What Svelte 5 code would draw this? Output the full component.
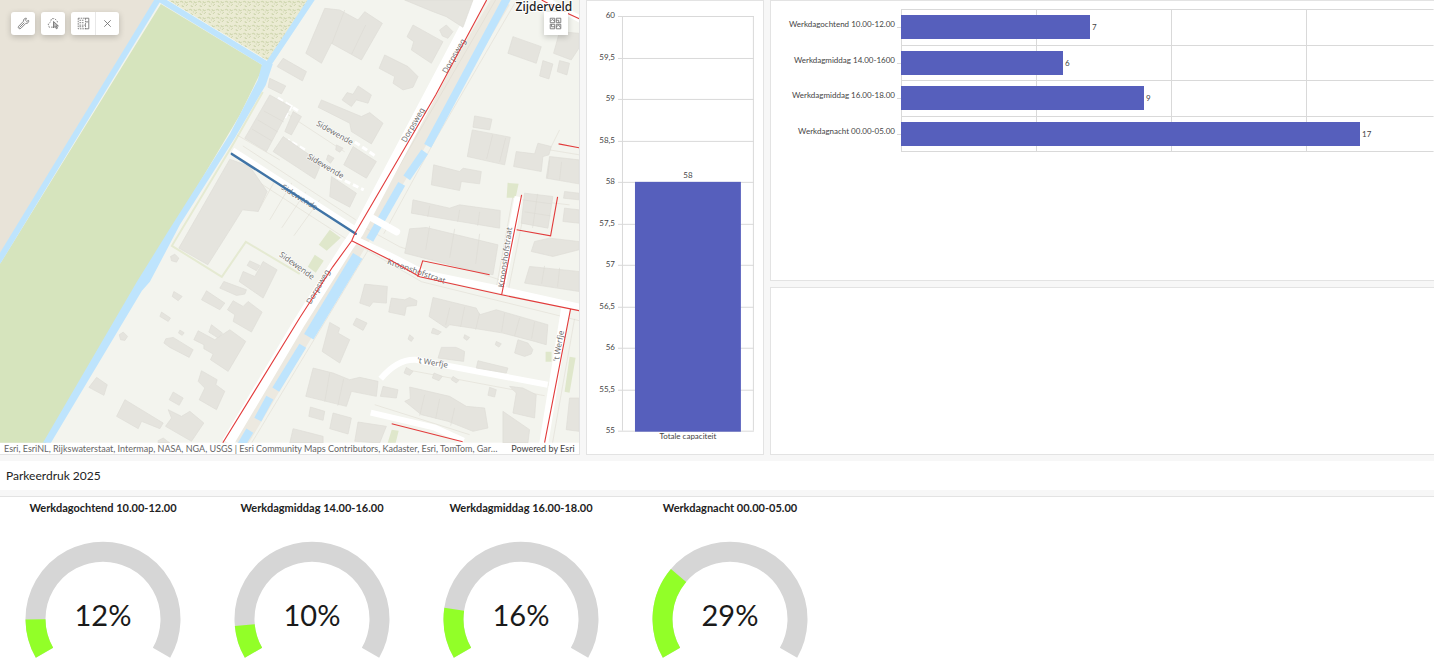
<script lang="ts">
  const capacity = 58;
  const capacityTicks = [60, 59.5, 59, 58.5, 58, 57.5, 57, 56.5, 56, 55.5, 55];
  const capacityY = (v: number) => Math.round(15 + (60 - v) * 83);

  const counts = [
    { label: "Werkdagochtend 10.00-12.00", value: 7 },
    { label: "Werkdagmiddag 14.00-1600", value: 6 },
    { label: "Werkdagmiddag 16.00-18.00", value: 9 },
    { label: "Werkdagnacht 00.00-05.00", value: 17 },
  ];
  const countLines = [0, 5, 10, 15, 20, 25, 30, 35, 40];
  const unit = 27;
  const rowY = [8, 44, 79, 115, 150];

  const gauges = [
    { label: "Werkdagochtend 10.00-12.00", value: 12.4 },
    { label: "Werkdagmiddag 14.00-16.00", value: 10.4 },
    { label: "Werkdagmiddag 16.00-18.00", value: 16 },
    { label: "Werkdagnacht 00.00-05.00", value: 29.3 },
  ];
  // 240 degree arc around (78, 78)
  const arc = "M19.5 111.8 A67.5 67.5 0 1 1 136.5 111.8";

  // building footprints, grouped per map tile (3 units per pixel)
  const tiles = [
    {
      x: 290,
      y: 0,
      shapes: [
        "105,25 150,30 205,60 225,35 278,70 215,180 125,130 95,190 48,160",
        "345,0 550,0 520,82 470,50 430,35",
        "370,75 460,125 425,190 365,150 372,125 352,110",
        "450,90 470,75 490,95 475,115 458,108",
        "285,165 355,200 385,230 370,262 340,270 310,250 315,230 268,205",
        "-20,175 50,215 38,243 -38,200",
        "205,258 245,285 235,310 200,300 185,320 157,300 172,278 190,283",
        "95,300 215,350 240,338 280,370 245,432 185,395 180,370 85,322",
        "190,440 260,485 230,535 162,495",
        "125,530 200,580 180,622 120,590",
        "-20,410 95,490 75,537 -50,455",
        "10,335 35,350 5,405 -15,395",
        "670,110 755,140 740,190 655,160",
        "810,95 868,100 868,145 845,180 792,160",
        "760,182 790,192 778,237 750,228",
        "810,182 840,190 832,225 803,215",
        "555,348 607,358 600,390 550,382",
        "548,390 662,412 645,495 533,470",
        "680,455 735,462 745,430 785,440 778,465 760,470 755,515 672,500",
        "780,470 868,480 868,552 770,535",
        "432,495 510,515 520,505 575,515 570,552 515,545 510,572 425,555",
        "370,600 480,625 510,615 632,632 630,685 480,660 365,640",
        "705,580 790,590 775,685 695,670",
        "825,575 868,580 868,600 822,595",
        "825,625 868,630 868,670 820,665",
        "140,435 160,445 150,457 138,450",
        "115,465 133,475 122,490 110,480",
      ],
    },
    {
      x: 0,
      y: 0,
      shapes: [
        "810,285 872,320 800,455 735,415",
        "810,235 858,258 845,282 805,262",
        "690,478 750,500 802,575 775,635 728,630 700,675 624,795 537,745",
      ],
    },
    {
      x: 0,
      y: 225,
      shapes: [
        "790,110 832,135 790,220 718,170 730,140 765,155",
        "750,108 780,122 770,138 742,122",
        "672,170 740,195 735,208 710,212 660,190",
        "620,198 675,235 660,255 605,225",
        "700,228 730,245 745,230 787,262 755,322 700,290 705,270 683,255",
        "635,300 668,325 655,340 627,322",
        "595,318 645,345 690,315 738,350 685,440 632,405 640,388 612,372 612,360 582,345",
        "605,438 652,465 648,480 675,500 650,555 598,525 615,490 595,470",
        "520,338 580,375 568,398 510,368 492,355 498,342",
        "290,458 322,480 312,512 267,488",
        "375,525 490,595 480,612 425,590 415,612 350,575",
        "520,502 550,520 538,542 508,525",
        "505,555 545,575 570,560 612,595 575,650 497,605 515,580",
        "358,330 370,322 383,335 375,347 362,345",
        "512,95 525,88 537,100 530,112 515,108",
        "522,200 547,215 535,228 517,215",
        "485,262 512,280 505,290 480,275",
        "540,316 553,324 547,332 536,325",
        "475,648 490,640 510,655 475,655",
      ],
    },
    {
      x: 290,
      y: 225,
      shapes: [
        "225,178 293,185 290,235 250,232 240,245 210,235",
        "305,220 345,225 360,218 382,228 380,242 350,245 345,272 297,262",
        "200,280 232,295 220,317 190,300",
        "120,293 150,310 145,325 180,345 150,415 97,380",
        "360,12 410,8 625,60 610,150 520,130 345,85",
        "430,218 560,250 570,270 620,255 775,300 770,360 735,350 640,325 560,312 480,300 470,310 418,275",
        "685,345 715,355 730,375 725,388 705,395 675,385",
        "455,368 500,368 525,380 522,410 445,400",
        "565,408 655,430 650,445 560,430",
        "70,430 130,445 180,465 210,458 265,470 260,515 185,500 170,545 48,515",
        "62,547 105,560 100,587 57,575",
        "130,565 185,580 175,628 120,612",
        "205,592 290,605 270,655 195,650",
        "10,612 100,635 100,655 0,655",
        "360,487 480,515 530,545 585,550 595,610 550,620 475,590 395,570 345,530 362,522",
        "660,485 700,490 740,510 735,580 670,565 680,505",
        "640,560 720,615 715,655 640,655",
        "735,50 780,40 868,50 868,75 790,95 725,80",
        "720,125 868,140 868,200 705,175",
        "840,520 868,520 868,620 830,615",
        "350,428 370,440 360,452 343,445",
        "433,445 458,455 448,468 428,460",
        "490,455 508,467 500,475 485,465",
        "280,485 325,495 320,520 272,515",
        "430,310 455,322 445,330 425,325",
        "600,488 620,495 615,517 595,512",
        "360,330 372,340 365,350 355,343",
        "525,330 540,338 532,347 522,340",
        "620,350 635,357 628,367 617,360",
      ],
    },
  ];

  const streets = [
    { name: "Dorpsweg", x: 447, y: 74, turn: -60 },
    { name: "Dorpsweg", x: 406, y: 143, turn: -60 },
    { name: "Dorpsweg", x: 311, y: 305, turn: -60 },
    { name: "Sidewende", x: 316, y: 125, turn: 30 },
    { name: "Sidewende", x: 307, y: 158, turn: 31 },
    { name: "Sidewende", x: 281, y: 189, turn: 32 },
    { name: "Sidewende", x: 279, y: 256, turn: 36 },
    { name: "Kroonshofstraat", x: 387, y: 264, turn: 19 },
    { name: "Kroonshofstraat", x: 504, y: 288, turn: -82 },
    { name: "'t Werfje", x: 417, y: 363, turn: 9 },
    { name: "'t Werfje", x: 559, y: 362, turn: -80 },
  ];
</script>

<main>
  <div class="top">
    <section class="panel map">
      <svg class="canvas" viewBox="0 0 580 443" preserveAspectRatio="xMinYMin slice" role="img" aria-label="Kaart Zijderveld">
        <defs>
          <pattern id="wood" width="9" height="8" patternUnits="userSpaceOnUse">
            <path d="M0 2l2-1 1 2M5 1l1 2 2-1M2 5l1 2 1-1M6 6l2-2M4 4h1" fill="none" stroke="#c3cda0" stroke-width="0.8" />
          </pattern>
        </defs>
        <rect width="580" height="443" fill="#f3f4ee" />
        <path d="M0 0H156L0 258z" fill="#e8e3d8" />
        <path d="M161 4L264 66 240 115 168 236 46 443H0V264z" fill="#d6e4bd" />
        <path d="M166 0L267 62 273 58 308 0z" fill="#ebebd3" />
        <path d="M166 0L267 62 273 58 308 0z" fill="url(#wood)" />
        <path d="M166 0L268 62 311 0" fill="none" stroke="#f8f8f3" stroke-width="2" />
        <path d="M159 -2L-2 262" fill="none" stroke="#bee4fd" stroke-width="6" />
        <path d="M158 -2L268 65 316 -7" fill="none" stroke="#bee4fd" stroke-width="6" />
        <path d="M263 61L273 64 266 85 235 138 180 225 150 282 142 291 51 443H43L137 282 168 232 230 134 258 80z" fill="#bee4fd" />
        <path d="M263 92L234 143 172 246 222 277 246 242 300 274" fill="none" stroke="#e5ead2" stroke-width="2" />
        <path d="M502 0L352 252 238 443" fill="none" stroke="#ece9e0" stroke-width="19" />
        <g fill="none" stroke="#ddd8ce" stroke-width="0.5">
          <path d="M496 0L362 231 344 257 231 443M517 0L436 139 384 234M368 251L252 443" />
          <path d="M243 146L356 220M229 163L348 240M272 104L345 152M237 135L280 160M258 212L275 181M270 220L292 183M282 228L306 192M294 236L320 200" />
          <path d="M365 249L422 282 580 321M360 225L400 247 500 280M549 386L568 319M575 319L553 443M497 286L515 187M509 289L527 200 570 205M560 130L550 150 580 155M407 370L545 396M375 405L470 435" />
        </g>
        <g fill="#dfe7cb">
          <path d="M330 230l11 8-14 13-8-6zM315 255l9 6-8 12-8-6zM508 183l11 1-3 14h-9zM570 357l6 1-6 35-5-1zM546 352h6v10h-6zM392 430l7 1-3 12h-8z" />
        </g>
        <g fill="none" stroke="#bee4fd" stroke-width="8">
          <path d="M508 -3L428 146" />
          <path d="M425 152L407 178" />
          <path d="M402 184L370 240" />
          <path d="M358 256L309 337" stroke-width="11" />
          <path d="M303 346L276 390" />
          <path d="M270 398L258 420" />
          <path d="M250 431L241 446" />
        </g>
        <g fill="none" stroke="#fff">
          <path d="M482 -3L358 232 348 246 300 322 228 443" stroke-width="12" />
          <path d="M233 150L354 228" stroke-width="5" />
          <path d="M352 238L390 256 425 274 502 290 582 308" stroke-width="7" />
          <path d="M365 214L397 232" stroke-width="7" stroke-linecap="round" />
          <path d="M501 293L519 197" stroke-width="8" />
          <path d="M566 309L544 445" stroke-width="9" />
          <path d="M381 379Q398 359 416 360L548 385" stroke-width="6" />
          <path d="M371 413L435 428 464 441" stroke-width="6" />
          <path d="M540 -3L582 20" stroke-width="7" />
          <path d="M278 98L300 112M355 142L377 157M337 177L364 190M292 105L285 118M305 150L288 140" stroke-width="3" stroke-dasharray="6 3" />
        </g>
        {#each tiles as tile}
          <g transform="translate({tile.x} {tile.y}) scale(0.3333)" fill="#e5e4de" stroke="#deddd6" stroke-width="2">
            {#each tile.shapes as points}
              <polygon {points} />
            {/each}
          </g>
        {/each}
        <g fill="none" stroke="#dbdad3" stroke-width="0.6">
          <path d="M345 10L332 44M366 25L352 54M264 111L284 122M258 120L278 132M252 129L272 141M493 135L487 159M506 138L500 162M525 212L551 216M523 200L552 204M538 194L533 228M450 308L446 325M465 307L461 327M480 313L476 330M505 313L502 332M520 318L515 336M535 322L532 339M550 160L548 178M562 162L560 180M330 373L325 402M344 379L338 406M425 395L420 416M440 399L436 419M455 408L451 426M480 234L476 264M455 229L450 258M430 226L426 250M560 268L558 287M545 266L542 284M430 206L428 217M460 210L458 222M480 212L478 226" />
        </g>
        <g class="names">
          {#each streets as street}
            <text transform="translate({street.x} {street.y}) rotate({street.turn})">{street.name}</text>
          {/each}
        </g>
        <path d="M232 154L356 234" fill="none" stroke="#3f73a6" stroke-width="2.4" stroke-linecap="round" />
        <g fill="none" stroke="#e23b3b" stroke-width="1.1">
          <path d="M487 0L436 95 355 234 352 241 333 267 300 318 223 443" />
          <path d="M352 241L390 260 420 277 502 295 580 311M418 277L423 261 490 275M502 295L522 195M517 230L551 236 558 197M559 144L580 148M571 309L545 443M392 424L463 442M542 0L565 12 580 19" />
        </g>
        <text class="town" x="516" y="11">Zijderveld</text>
      </svg>

      <div class="toolbar">
        <button class="tool" aria-label="Gereedschap">
          <svg viewBox="0 0 16 16"><path d="M14.3 4.2l-2.4 1.2-1.4-1.3 1.1-2.5c-2-.5-4 1.3-3.5 3.5L2 11.4c-1.5 1.7 1 4.1 2.7 2.6l6.2-6.2c2.2.5 4-1.5 3.4-3.6z" /><path d="M3 13l6-6" /></svg>
        </button>
        <button class="tool" aria-label="Selecteren">
          <svg viewBox="0 0 16 16"><path d="M7 12.5H2.5L1.5 8.500l3-2.500 1-4h4l3 3 .5 2" stroke-dasharray="2 1.5" /><path d="M8 5.500v8l2-2 1.500 3 1.500-.8-1.500-2.700h2.500z" fill="#bbb" /></svg>
        </button>
        <div class="pair">
          <button aria-label="Selectie">
            <svg viewBox="0 0 16 16"><path d="M1.500 1.500h9v13h-9z" stroke-dasharray="2 1" /><path d="M10 1.500h4.500v13H10M11 6h3" /><path d="M3 4h5M3 7h5M3 10h8M3 12h5" stroke-dasharray="2 1" /></svg>
          </button>
          <button aria-label="Selectie wissen">
            <svg viewBox="0 0 16 16"><path d="M4 4l8 8M12 4l-8 8" /></svg>
          </button>
        </div>
      </div>
      <button class="tool basemap" aria-label="Basiskaarten">
        <svg viewBox="0 0 16 16"><path d="M1.500 1.500h5.500v5.500H1.500zM9 1.500h5.500v5.500H9zM1.500 9h5.500v5.500H1.500zM9 9h5.500v5.500H9zM2 5l2-2 3 2M9 4h3v3M3 9v3h4M9 12l3-2 2 3" /></svg>
      </button>

      <footer>
        <span class="sources">Esri, EsriNL, Rijkswaterstaat, Intermap, NASA, NGA, USGS | Esri Community Maps Contributors, Kadaster, Esri, TomTom, Gar…</span>
        <span>Powered by Esri</span>
      </footer>
    </section>

    <section class="panel">
      <svg class="chart column" viewBox="0 0 177 453" role="img" aria-label="Totale capaciteit">
        {#each capacityTicks as tick}
          <path class="grid" d="M31 {capacityY(tick) + 0.5}H167" />
          <text x="28" y={capacityY(tick) + 2} text-anchor="end">{String(tick).replace(".", ",")}</text>
        {/each}
        <path class="grid" d="M35.500 15V430M166.500 15V430" />
        <rect class="bar" x="48" y={capacityY(capacity)} width="106" height={430 - capacityY(capacity) + 1} />
        <text x="101" y={capacityY(capacity) - 4} text-anchor="middle">{capacity}</text>
        <text x="101" y="438" text-anchor="middle">Totale capaciteit</text>
      </svg>
    </section>

    <div class="stack">
      <section class="panel counts">
        <svg class="chart rows" role="img" aria-label="Aantal geparkeerde voertuigen">
          {#each rowY as y}
            <line class="grid" x1="130" x2="100%" y1={y + 0.5} y2={y + 0.5} />
          {/each}
          {#each countLines as line}
            <path class="grid" d="M{130.5 + line * unit} 8V151" />
          {/each}
          {#each counts as row, i}
            <path class="grid" d="M126 {rowY[i] + 18.5}h4" />
            <text x="124" y={rowY[i] + 18} text-anchor="end">{row.label}</text>
            <rect class="bar" x="130" y={rowY[i] + 6} width={row.value * unit} height="24" />
            <text x={132 + row.value * unit} y={rowY[i] + 21}>{row.value}</text>
          {/each}
        </svg>
      </section>
      <section class="panel empty"></section>
    </div>
  </div>

  <header>
    <h1>Parkeerdruk 2025</h1>
  </header>

  <section class="gauges">
    {#each gauges as gauge}
      <article>
        <h2>{gauge.label}</h2>
        <svg viewBox="0 0 156 118" role="img" aria-label="{gauge.label}: {Math.round(gauge.value)}%">
          <path d={arc} stroke="#d6d6d6" />
          <path d={arc} stroke="#92ff28" pathLength="100" stroke-dasharray="{gauge.value} 200" />
          <text x="78" y="85" text-anchor="middle">{Math.round(gauge.value)}%</text>
        </svg>
      </article>
    {/each}
  </section>
</main>

<style>
  :global(body) {
    margin: 0;
    background: #f7f7f7;
  }
  main {
    display: flex;
    flex-direction: column;
    gap: 6px;
    min-height: 100vh;
    font-family: Lato, "Liberation Sans", sans-serif;
    color: #222;
  }
  .top {
    display: grid;
    grid-template-columns: minmax(0, 580fr) minmax(0, 179fr) minmax(0, 664fr);
    gap: 6px;
  }
  .panel {
    box-sizing: border-box;
    background: #fff;
    border: 1px solid #e3e3e3;
  }
  .map {
    position: relative;
    display: flex;
    flex-direction: column;
    border-width: 0 1px 1px 0;
  }
  .canvas {
    display: block;
    flex: 1;
    width: 100%;
    min-height: 0;
  }
  .names text {
    font: 8px "Noto Sans", sans-serif;
    fill: #707070;
    stroke: #fff;
    stroke-width: 1.5px;
    stroke-opacity: 0.7;
    paint-order: stroke;
  }
  .town {
    font: 500 12px "Noto Sans", sans-serif;
    fill: #222;
    stroke: #fff;
    stroke-width: 2px;
    paint-order: stroke;
  }
  .toolbar {
    position: absolute;
    top: 12px;
    left: 11px;
    display: flex;
    gap: 6px;
  }
  .toolbar button,
  .basemap {
    display: flex;
    align-items: center;
    justify-content: center;
    width: 24px;
    height: 23px;
    padding: 0;
    border: 0;
    background: #fff;
  }
  .tool,
  .pair {
    border-radius: 3px;
    box-shadow: 0 2px 6px rgb(0 0 0 / 0.2);
  }
  .pair {
    display: flex;
    overflow: hidden;
  }
  .pair button + button {
    border-left: 1px solid #e8e8e8;
  }
  button svg {
    width: 13px;
    height: 13px;
    fill: none;
    stroke: #6a6a6a;
    stroke-width: 1;
  }
  .basemap {
    position: absolute;
    top: 12px;
    right: 11px;
    border-radius: 0;
  }
  footer {
    display: flex;
    justify-content: space-between;
    gap: 8px;
    padding: 0 4px;
    font-size: 9px;
    line-height: 11px;
    color: #444;
    white-space: nowrap;
  }
  .sources {
    color: #666;
  }
  .chart {
    display: block;
    width: 100%;
    font-size: 8px;
  }
  .column {
    height: auto;
  }
  .rows {
    height: 160px;
  }
  .chart text {
    fill: #444;
  }
  .grid {
    fill: none;
    stroke: #d9d9d9;
  }
  .bar {
    fill: #565fbc;
  }
  .stack {
    display: grid;
    grid-template-rows: 281fr 168fr;
    gap: 6px;
  }
  .counts,
  .empty {
    border-right: 0;
  }
  header {
    padding: 5px 6px;
    background: #fff;
  }
  h1 {
    margin: 0;
    font-size: 12px;
    line-height: 19px;
    font-weight: 400;
  }
  .gauges {
    flex: 1;
    display: grid;
    grid-template-columns: repeat(auto-fill, 200px);
    align-content: start;
    gap: 9px;
    padding: 3px 3px 0;
    border-top: 1px solid #e3e3e3;
    background: #fff;
  }
  article {
    display: flex;
    flex-direction: column;
    align-items: center;
    gap: 25px;
  }
  h2 {
    margin: 0;
    font-size: 11px;
    line-height: 16px;
    font-weight: 700;
  }
  article svg {
    width: 156px;
    height: 118px;
    fill: none;
    stroke-width: 20;
  }
  article text {
    font-size: 29px;
    font-weight: 400;
    fill: #1a1a1a;
  }
</style>
